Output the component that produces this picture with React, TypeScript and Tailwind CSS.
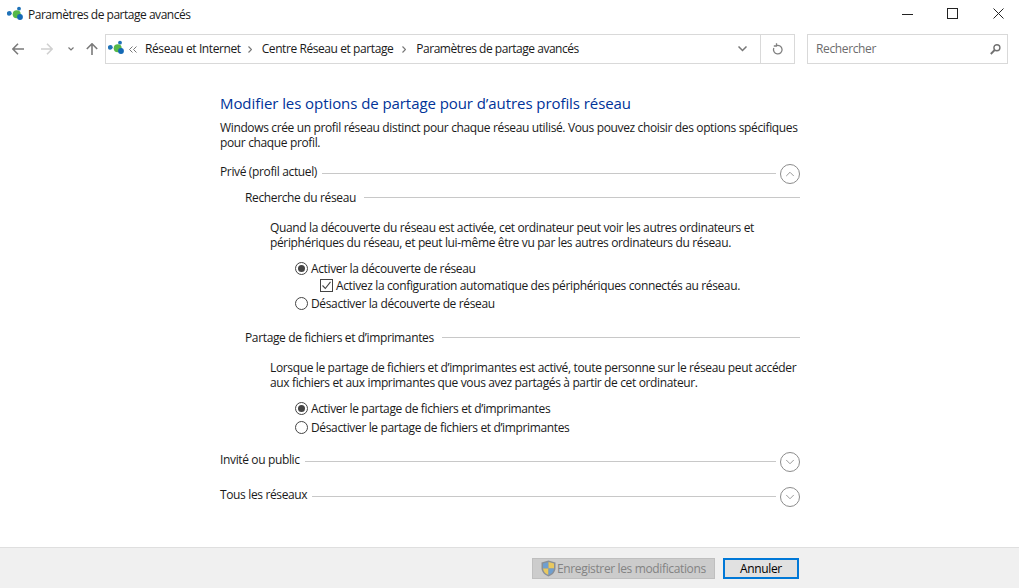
import { ChevronDown, ChevronUp } from "lucide-react";

function NetworkIcon() {
  return (
    <svg width="16" height="16" viewBox="0 0 16 16">
      <circle cx="2.300" cy="7.300" r="2.400" fill="#1f72b8" />
      <circle cx="12" cy="2.700" r="1.900" fill="#1f72b8" />
      <circle cx="9.700" cy="8.300" r="4" fill="#55b848" />
      <circle cx="13" cy="11" r="2.900" fill="#1469b5" />
    </svg>
  );
}

function Shield() {
  return (
    <svg width="15" height="17" viewBox="0 0 15 17" className="shrink-0">
      <path d="M7.500 .5 14.500 2.500V8c0 4-3 7-7 8.500C3.500 15 .5 12 .5 8V2.500Z" fill="#8a8f96" />
      <path d="M7.500 2 7.500 8.500H2V3.500Z" fill="#6f9fd0" />
      <path d="M7.500 2 13 3.500V8.500H7.500Z" fill="#e8c860" />
      <path d="M2 8.500H7.500V15C4.500 14 2.500 12 2 8.500Z" fill="#e8c860" />
      <path d="M13 8.500H7.500V15C10.500 14 12.500 12 13 8.500Z" fill="#6f9fd0" />
    </svg>
  );
}

function Arrow({ color, rotate }: { color: string; rotate?: string }) {
  return (
    <svg width="12" height="12" viewBox="0 0 12 12" className={`shrink-0 ${rotate ?? ""}`}>
      <path d="M.5 6H12M6 .8 .8 6 6 11.200" fill="none" stroke={color} strokeWidth="1.600" />
    </svg>
  );
}

function Crumb() {
  return (
    <svg width="4" height="7" viewBox="0 0 4 7" className="shrink-0">
      <path d="M.5 .5 3.500 3.500 .5 6.500" fill="none" stroke="#777" strokeWidth="1.200" />
    </svg>
  );
}

function Radio({ on, label }: { on?: boolean; label: string }) {
  return (
    <div className="flex items-center h-[15px] ml-[75px]">
      <span className="w-[13px] h-[13px] rounded-full border border-[#444] flex items-center justify-center mr-[3px] shrink-0">
        {on && <span className="w-[7px] h-[7px] rounded-full bg-[#444]" />}
      </span>
      <span>{label}</span>
    </div>
  );
}

function Section({ label, open }: { label: string; open?: boolean }) {
  return (
    <div className="flex items-start h-[20px]">
      <span className="mr-[5px]">{label}</span>
      <span className="flex-1 h-px bg-[#c8c8c8] mt-[9px] mr-[4px]" />
      <span className="w-[20px] h-[20px] rounded-full border border-[#8c8c8c] flex items-center justify-center">
        {open ? <ChevronUp size={14} strokeWidth={1.500} color="#8c8c8c" /> : <ChevronDown size={14} strokeWidth={1.500} color="#8c8c8c" />}
      </span>
    </div>
  );
}

function SubHead({ label }: { label: string }) {
  return (
    <div className="flex items-center h-[15px] ml-[25px]">
      <span className="mr-[8px]">{label}</span>
      <span className="flex-1 h-px bg-[#c8c8c8]" />
    </div>
  );
}

export default function App() {
  return (
    <div className="w-[1019px] h-[588px] bg-white flex flex-col overflow-hidden text-[12px] leading-[15px] text-[#1a1a1a] tracking-[-0.36px] whitespace-nowrap font-['Open_Sans',sans-serif]">
      <div className="h-[28px] flex items-center shrink-0">
        <span className="ml-[7px] mr-[5px]"><NetworkIcon /></span>
        <span className="flex-1 tracking-[-0.48px]">Paramètres de partage avancés</span>
        <svg width="11" height="11" viewBox="0 0 11 11" className="mr-[34px] -mt-[2px]"><path d="M0 6.500H11" stroke="#222" /></svg>
        <svg width="11" height="11" viewBox="0 0 11 11" className="mr-[35px] -mt-[2px]"><rect x=".5" y=".5" width="10" height="10" fill="none" stroke="#222" /></svg>
        <svg width="11" height="11" viewBox="0 0 11 11" className="mr-[15px] -mt-[2px]"><path d="M.5 .5 10.500 10.500M10.500 .5 .5 10.500" stroke="#222" /></svg>
      </div>
      <div className="h-[30px] mt-[6px] flex items-center shrink-0">
        <span className="ml-[12px]"><Arrow color="#7a7a7a" /></span>
        <span className="ml-[17px]"><Arrow color="#d0d0d0" rotate="rotate-180" /></span>
        <svg width="6" height="4" viewBox="0 0 6 4" className="ml-[15px] shrink-0"><path d="M.5 .5 3 3 5.500 .5" fill="none" stroke="#777" strokeWidth="1.200" /></svg>
        <span className="ml-[12px]"><Arrow color="#7a7a7a" rotate="rotate-90" /></span>
        <div className="ml-[7px] w-[690px] h-[30px] border border-[#d9d9d9] flex items-center">
          <span className="ml-[2px] pb-[2px]"><NetworkIcon /></span>
          <svg width="8" height="7" viewBox="0 0 8 7" className="ml-[5px] mr-[8px] shrink-0"><path d="M3.500 .5 .5 3.500 3.500 6.500M7.500 .5 4.500 3.500 7.500 6.500" fill="none" stroke="#777" /></svg>
          <span className="pb-[2px] tracking-[-0.4px]">Réseau et Internet</span>
          <span className="ml-[7px] mr-[10px]"><Crumb /></span>
          <span className="pb-[2px] tracking-[-0.42px]">Centre Réseau et partage</span>
          <span className="ml-[9px] mr-[10px]"><Crumb /></span>
          <span className="flex-1 pb-[2px] tracking-[-0.48px]">Paramètres de partage avancés</span>
          <svg width="9" height="6" viewBox="0 0 9 6" className="mr-[13px] shrink-0"><path d="M.5 .5 4.500 4.500 8.500 .5" fill="none" stroke="#777" strokeWidth="1.500" /></svg>
          <span className="w-[34px] h-full border-l border-[#d9d9d9] flex items-center justify-center">
            <svg width="12" height="12" viewBox="0 0 12 12"><path d="M4.300 2.600A4.300 4.300 0 1 1 1.800 5M4.500 .3V3H1.800" fill="none" stroke="#808080" strokeWidth="1.300" /></svg>
          </span>
        </div>
        <div className="ml-[12px] w-[201px] h-[30px] border border-[#d9d9d9] flex items-center pl-[8px] pr-[5px] justify-between text-[#6d6d6d]">
          <span className="pb-[2px]">Rechercher</span>
          <svg width="12" height="12" viewBox="0 0 12 12"><circle cx="6.900" cy="4.700" r="3" fill="none" stroke="#707070" strokeWidth="1.400" /><path d="M4.700 7 .8 11" stroke="#707070" strokeWidth="1.800" /></svg>
        </div>
      </div>

      <div className="flex-1 ml-[220px] w-[580px] flex flex-col">
        <h1 className="text-[15px] leading-[20px] mt-[29px] tracking-[-0.07px] text-[#003399]">Modifier les options de partage pour d’autres profils réseau</h1>
        <p className="mt-[7px]">Windows crée un profil réseau distinct pour chaque réseau utilisé. Vous pouvez choisir des options spécifiques<br />pour chaque profil.</p>
        <div className="mt-[14px]"><Section label="Privé (profil actuel)" open /></div>
        <div className="mt-[6px]"><SubHead label="Recherche du réseau" /></div>
        <p className="mt-[15px] ml-[50px]">Quand la découverte du réseau est activée, cet ordinateur peut voir les autres ordinateurs et<br />périphériques du réseau, et peut lui-même être vu par les autres ordinateurs du réseau.</p>
        <div className="mt-[11px]"><Radio on label="Activer la découverte de réseau" /></div>
        <div className="mt-[2px] ml-[100px] flex items-center h-[15px]">
          <span className="w-[13px] h-[13px] border border-[#444] mr-[3px] flex items-center justify-center shrink-0">
            <svg width="11" height="11" viewBox="0 0 11 11"><path d="M1.500 5.500 4.300 8.500 9.500 1.800" fill="none" stroke="#444" strokeWidth="1.100" /></svg>
          </span>
          <span>Activez la configuration automatique des périphériques connectés au réseau.</span>
        </div>
        <div className="mt-[3px]"><Radio label="Désactiver la découverte de réseau" /></div>
        <div className="mt-[19px]"><SubHead label="Partage de fichiers et d’imprimantes" /></div>
        <p className="mt-[15px] ml-[50px]">Lorsque le partage de fichiers et d’imprimantes est activé, toute personne sur le réseau peut accéder<br />aux fichiers et aux imprimantes que vous avez partagés à partir de cet ordinateur.</p>
        <div className="mt-[11px]"><Radio on label="Activer le partage de fichiers et d’imprimantes" /></div>
        <div className="mt-[4px]"><Radio label="Désactiver le partage de fichiers et d’imprimantes" /></div>
        <div className="mt-[17px]"><Section label="Invité ou public" /></div>
        <div className="mt-[15px]"><Section label="Tous les réseaux" /></div>
      </div>

      <div className="h-[41px] shrink-0 bg-[#f0f0f0] border-t border-[#dfdfdf] flex items-start justify-end pr-[220px] pt-[10px]">
        <div className="w-[183px] h-[21px] bg-[#cccccc] border border-[#bfbfbf] flex items-center pl-[8px] text-[#838383]">
          <Shield />
          <span className="ml-[1px]">Enregistrer les modifications</span>
        </div>
        <div className="ml-[8px] w-[76px] h-[21px] bg-[#e1e1e1] border-2 border-[#0078d7] flex items-center justify-center text-black">Annuler</div>
      </div>
    </div>
  );
}
